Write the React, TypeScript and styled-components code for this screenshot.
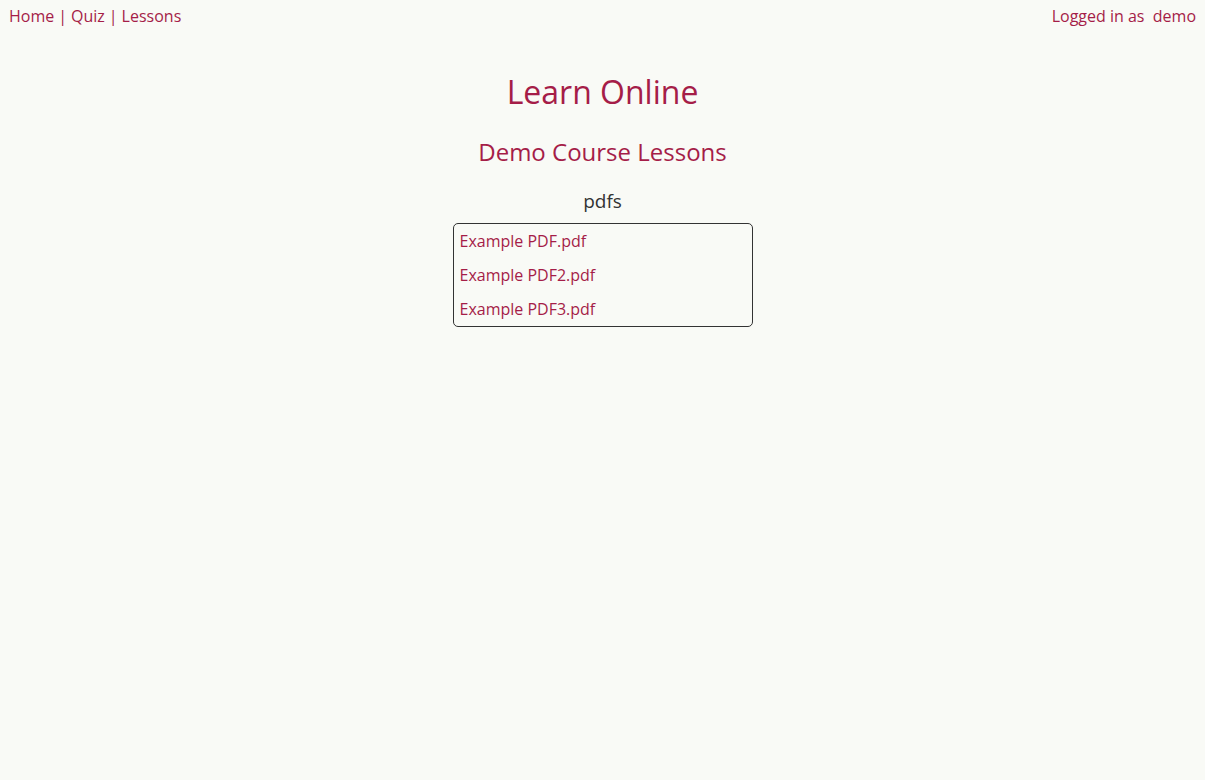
import React from "react";
import styled, { createGlobalStyle } from "styled-components";

const Global = createGlobalStyle`
  html, body { margin: 0; padding: 0; background: #f9faf6; }
  body { font-family: "Open Sans", "Liberation Sans", sans-serif; color: #333; }
`;

const accent = "#a51d48";

const TopBar = styled.header`
  display: flex;
  justify-content: space-between;
  align-items: center;
  padding: 5px 9px 0 9px;
  font-size: 16px;
  line-height: 22px;
  color: ${accent};
`;

const NavLink = styled.a`
  color: ${accent};
  text-decoration: none;
`;

const Sep = styled.span`
  margin: 0 4px;
`;

const Main = styled.main`
  display: flex;
  flex-direction: column;
  align-items: center;
`;

const Title = styled.h1`
  margin: 43px 0 0;
  font-size: 32px;
  font-weight: 400;
  line-height: 44px;
  color: ${accent};
`;

const Subtitle = styled.h2`
  margin: 21px 0 0;
  font-size: 24px;
  font-weight: 400;
  line-height: 33px;
  color: ${accent};
`;

const Section = styled.h3`
  margin: 20px 0 0;
  font-size: 19px;
  font-weight: 400;
  line-height: 26px;
  color: #333;
`;

const List = styled.ul`
  list-style: none;
  margin: 9px 0 0;
  padding: 0;
  width: 298px;
  border: 1px solid #333;
  border-radius: 5px;
  display: flex;
  flex-direction: column;
`;

const Item = styled.li`
  padding: 0 6px;
  font-size: 16px;
  line-height: 34px;
`;

export default function App() {
  const files = ["Example PDF.pdf", "Example PDF2.pdf", "Example PDF3.pdf"];
  return (
    <>
      <Global />
      <TopBar>
        <nav>
          <NavLink href="#">Home</NavLink>
          <Sep>|</Sep>
          <NavLink href="#">Quiz</NavLink>
          <Sep>|</Sep>
          <NavLink href="#">Lessons</NavLink>
        </nav>
        <span>Logged in as&nbsp; demo</span>
      </TopBar>
      <Main>
        <Title>Learn Online</Title>
        <Subtitle>Demo Course Lessons</Subtitle>
        <Section>pdfs</Section>
        <List>
          {files.map((f) => (
            <Item key={f}>
              <NavLink href="#">{f}</NavLink>
            </Item>
          ))}
        </List>
      </Main>
    </>
  );
}
